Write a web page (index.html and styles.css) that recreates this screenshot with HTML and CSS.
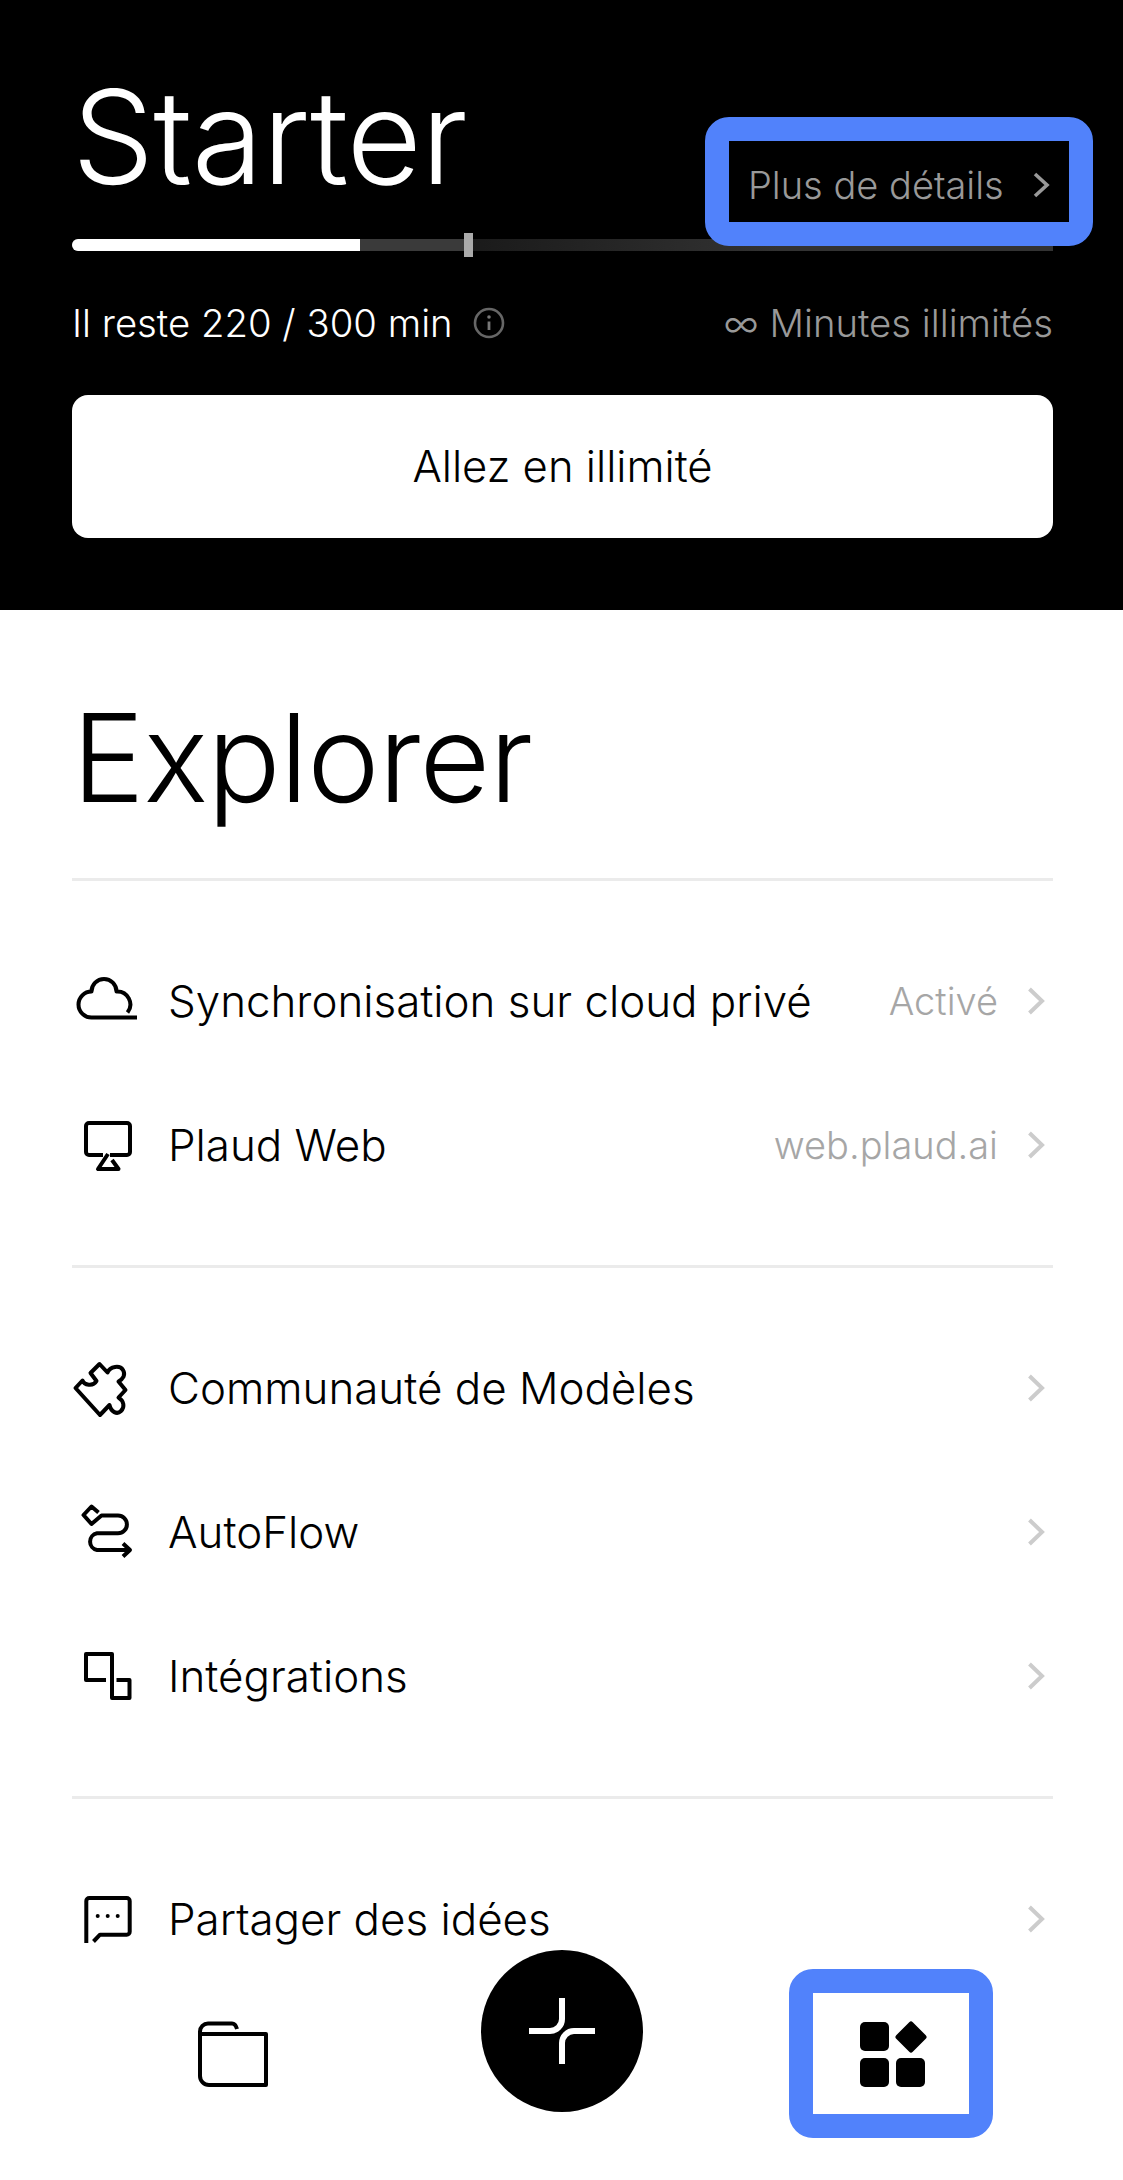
FILE: index.html
```html
<!DOCTYPE html>
<html lang="fr">
<head>
  <meta charset="UTF-8" />
  <title>Explorer</title>
  <link rel="stylesheet" href="styles.css">
</head>
<body>
  <div class="page">

    <section class="hero">
      <h1>Starter</h1>
      <div class="meter">
        <div class="meter-used"></div>
        <div class="meter-mark"></div>
      </div>
      <div class="quota">
        <span class="quota-left">Il reste 220 / 300 min
          <svg class="info" viewBox="0 0 32 32" fill="none">
            <circle cx="16" cy="16" r="14" stroke="#666" stroke-width="2.6"/>
            <circle cx="16" cy="10" r="1.8" fill="#777"/>
            <path d="M16 14.5V23" stroke="#777" stroke-width="2.8"/>
          </svg>
        </span>
        <span class="quota-right">∞ Minutes illimités</span>
      </div>
      <button class="upgrade">Allez en illimité</button>

      <a class="details">
        <span>Plus de détails</span>
        <svg class="chev-light" viewBox="0 0 20 28" fill="none">
          <path d="M3 3L15 14L3 25" stroke="#999" stroke-width="3.6"/>
        </svg>
      </a>
    </section>

    <section class="explore">
      <h2>Explorer</h2>

      <ul class="group">
        <li class="row">
          <svg class="icon" viewBox="0 0 72 72"><path d="M65 52.500H20A13 13 0 0 1 6.500 39.500A13 13 0 0 1 19.500 26.500A12.500 12.500 0 0 1 44.500 26.500A13 13 0 0 1 55.500 47.500"/></svg>
          <span class="label">Synchronisation sur cloud privé</span>
          <span class="value">Activé</span>
          <svg class="chev" viewBox="0 0 20 28"><path d="M3.500 2L16 14L3.500 26"/></svg>
        </li>
        <li class="row">
          <svg class="icon" viewBox="0 0 72 72"><path d="M31 46H17A3 3 0 0 1 14 43V17A3 3 0 0 1 17 14H55A3 3 0 0 1 58 17V43A3 3 0 0 1 55 46H38"/><path d="M36 45L26 60H46.500L40 51"/></svg>
          <span class="label">Plaud Web</span>
          <span class="value">web.plaud.ai</span>
          <svg class="chev" viewBox="0 0 20 28"><path d="M3.500 2L16 14L3.500 26"/></svg>
        </li>
      </ul>

      <ul class="group">
        <li class="row">
          <svg class="icon" viewBox="0 0 72 72"><path d="M3.500 36L10.500 28.500C12 33 21 35 24.500 29L18.500 21L27.500 12L35.500 20.500C38 14 48 13 51 18C54 23 51 27 46.500 29.500L53.500 38L46.500 45.500C52 49 53 55 49 59C45 63 39 60 37.500 53L28 63Z"/></svg>
          <span class="label">Communauté de Modèles</span>
          <svg class="chev" viewBox="0 0 20 28"><path d="M3.500 2L16 14L3.500 26"/></svg>
        </li>
        <li class="row">
          <svg class="icon" viewBox="0 0 72 72"><path d="M26.500 16.500L19.500 10.500L11.500 19L19.500 28L29.500 19.500H46A8.800 8.800 0 0 1 46 37.300H25A8.500 8.500 0 0 0 25 54H57"/><path d="M51 47.500L58 54L51 60.500"/></svg>
          <span class="label">AutoFlow</span>
          <svg class="chev" viewBox="0 0 20 28"><path d="M3.500 2L16 14L3.500 26"/></svg>
        </li>
        <li class="row">
          <svg class="icon" viewBox="0 0 72 72"><path d="M34 40H14V14H40V58H57.500V40H44.500"/></svg>
          <span class="label">Intégrations</span>
          <svg class="chev" viewBox="0 0 20 28"><path d="M3.500 2L16 14L3.500 26"/></svg>
        </li>
      </ul>

      <ul class="group">
        <li class="row">
          <svg class="icon" viewBox="0 0 72 72"><path d="M14.300 60V18A3 3 0 0 1 17.300 15H54.700A3 3 0 0 1 57.700 18V48.700A3 3 0 0 1 54.700 51.700H28L21.500 58.500"/><circle class="dot" cx="25.700" cy="33" r="2"/><circle class="dot" cx="35.700" cy="33" r="2"/><circle class="dot" cx="45.700" cy="33" r="2"/></svg>
          <span class="label">Partager des idées</span>
          <svg class="chev" viewBox="0 0 20 28"><path d="M3.500 2L16 14L3.500 26"/></svg>
        </li>
      </ul>
    </section>

    <nav class="tabs">
      <div class="tab">
        <svg class="icon" viewBox="0 0 72 72"><path d="M40 11Q38.500 5.500 35 5.500H11A8 8 0 0 0 3 13.500V58A9 9 0 0 0 12 67H69V16H3"/></svg>
      </div>
      <div class="fab">
        <svg class="fab-icon" viewBox="0 0 72 72"><path d="M36 3V24A12 12 0 0 1 24 36H3M69 36H48A12 12 0 0 0 36 48V69"/></svg>
      </div>
      <div class="tab tab-active">
        <svg class="apps" viewBox="0 0 72 72">
          <rect x="5" y="4" width="29" height="29" rx="5"/>
          <rect x="5" y="40" width="29" height="29" rx="5"/>
          <rect x="41" y="40" width="29" height="29" rx="5"/>
          <path d="M56 6L69 19L56 32L43 19Z"/>
        </svg>
      </div>
    </nav>

  </div>
</body>
</html>
```

FILE: styles.css
```css
* {
  box-sizing: border-box;
}
body {
  margin: 0;
  font-family: Inter, "Liberation Sans", sans-serif;
  font-weight: 350;
  background: #fff;
  color: #000;
}
.page {
  position: relative;
  width: 1123px;
  height: 2180px;
  overflow: hidden;
}

/* top black card */
.hero {
  position: relative;
  height: 610px;
  padding: 57px 70px 0 72px;
  background: #000;
  color: #fff;
}
h1 {
  margin: 0;
  font-weight: 300;
  font-size: 130px;
  line-height: 160px;
  letter-spacing: -1px;
}
.meter {
  position: relative;
  height: 12px;
  margin-top: 22px;
  border-radius: 6px 0 0 6px;
  background: linear-gradient(90deg, #3a3a3a 40.500%, #1a1a1a 40.500%, #333 72%);
}
.meter-used {
  width: 288px;
  height: 12px;
  border-radius: 6px 0 0 6px;
  background: #fff;
}
.meter-mark {
  position: absolute;
  left: 392px;
  top: -6px;
  width: 9px;
  height: 24px;
  background: #aaa;
}
.quota {
  display: flex;
  justify-content: space-between;
  align-items: center;
  margin-top: 47px;
  font-size: 38.300px;
  line-height: 50px;
}
.quota-left {
  display: flex;
  align-items: center;
  gap: 20px;
}
.info {
  width: 32px;
  height: 32px;
}
.quota-right {
  color: #999;
}
.upgrade {
  display: block;
  width: 100%;
  height: 143px;
  margin-top: 47px;
  border: none;
  border-radius: 16px;
  background: #fff;
  color: #000;
  font-family: inherit;
  font-weight: inherit;
  font-size: 43.600px;
}
.details {
  position: absolute;
  left: 705px;
  top: 117px;
  width: 388px;
  height: 129px;
  display: flex;
  align-items: center;
  justify-content: space-between;
  padding: 6px 17px 0 19px;
  border: 24px solid #5182fb;
  border-radius: 24px;
  background: #000;
  color: #999;
  font-size: 38px;
}
.chev-light {
  width: 20px;
  height: 28px;
}

/* list */
.explore {
  padding: 48px 70px 0 72px;
}
h2 {
  height: 220px;
  margin: 0;
  padding-top: 20px;
  font-weight: 300;
  font-size: 122px;
  line-height: 160px;
  letter-spacing: -1px;
}
.group {
  list-style: none;
  margin: 0;
  padding: 48px 0;
  border-top: 3px solid #ebebeb;
}
.row {
  display: flex;
  align-items: center;
  gap: 24px;
  height: 144px;
  font-size: 43.900px;
}
.label {
  flex: 1;
}
.value {
  margin-right: 4px;
  color: #a6a6a6;
  font-size: 38px;
}
.icon {
  flex: none;
  width: 72px;
  height: 72px;
  fill: none;
  stroke: #000;
  stroke-width: 4;
  stroke-linejoin: round;
}
.dot {
  fill: #000;
  stroke: none;
}
.chev {
  flex: none;
  width: 20px;
  height: 28px;
  margin-right: 7px;
  fill: none;
  stroke: #ccc;
  stroke-width: 4;
}

/* bottom bar */
.tabs {
  position: absolute;
  left: 131px;
  bottom: 42px;
  display: grid;
  grid-template-columns: repeat(3, 204px);
  column-gap: 125px;
  height: 188px;
}
.tab {
  align-self: end;
  height: 169px;
  display: flex;
  align-items: center;
  justify-content: center;
}
.tab-active {
  border: 24px solid #5182fb;
  border-radius: 24px;
  background: #fff;
}
.fab {
  justify-self: center;
  width: 162px;
  height: 162px;
  display: flex;
  align-items: center;
  justify-content: center;
  border-radius: 50%;
  background: #000;
}
.fab-icon {
  width: 72px;
  height: 72px;
  fill: none;
  stroke: #fff;
  stroke-width: 6;
}
.apps {
  width: 72px;
  height: 72px;
  fill: #000;
  stroke-linejoin: round;
}
.apps path {
  stroke: #000;
  stroke-width: 5;
}
```
